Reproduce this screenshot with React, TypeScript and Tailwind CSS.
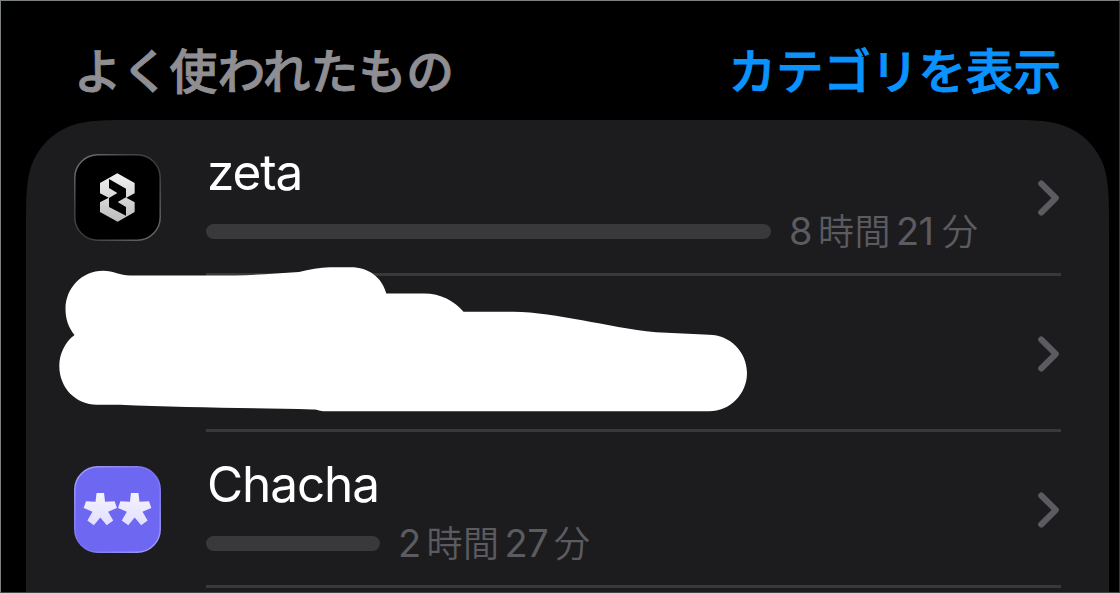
import type { ReactNode } from "react";

const jp = "font-['Inter','Noto_Sans_CJK_JP',sans-serif]";

function Chevron() {
  return (
    <svg className="mt-[3px] h-10 w-6 shrink-0" viewBox="0 0 24 40" fill="none">
      <path d="M4.2 5.5L18.8 20L4.2 34.5" stroke="#5b5b60" strokeWidth="6" strokeLinecap="round" strokeLinejoin="round" />
    </svg>
  );
}

function ZetaIcon() {
  return (
    <svg className="size-[87px]" viewBox="0 0 87 87">
      <defs>
        <linearGradient id="zetaEdge" x1="0" y1="0" x2="1" y2="1">
          <stop offset="0" stopColor="#77777a" />
          <stop offset="0.3" stopColor="#454547" />
          <stop offset="0.55" stopColor="#39393b" />
          <stop offset="1" stopColor="#6e6e70" />
        </linearGradient>
        <linearGradient id="zetaMark" x1="0" y1="0" x2="0" y2="1">
          <stop offset="0" stopColor="#f2f2f2" />
          <stop offset="1" stopColor="#bcbcbc" />
        </linearGradient>
      </defs>
      <rect x="0.8" y="0.8" width="85.4" height="85.4" rx="23" fill="#000" stroke="url(#zetaEdge)" strokeWidth="1.5" />
      <g transform="translate(-14 -14) scale(.33333)">
        <path fill="url(#zetaMark)" d="M172 100L224 129V160L199 173L224 187V216L173 245L120 216V187L146 173L120 160V129Z" />
        <path fill="#000" d="M147 117L198 146V172L173 186L198 201V227L147 201V174L172 159L147 144Z" />
      </g>
    </svg>
  );
}

function ChachaIcon() {
  const star =
    "M-11 -50H11L14 -24L42 -26L49 -6L23 5L38 31L19 45L0 22L-19 45L-38 31L-23 5L-49 -6L-42 -26L-14 -24Z";
  return (
    <svg className="size-[87px]" viewBox="0 0 87 87">
      <defs>
        <linearGradient id="chachaEdge" x1="0" y1="0" x2="1" y2="1">
          <stop offset="0" stopColor="#a6a2f8" />
          <stop offset="0.5" stopColor="#7770ee" />
          <stop offset="1" stopColor="#a29df5" />
        </linearGradient>
        <linearGradient id="chachaStar" x1="0" y1="0" x2="0" y2="1">
          <stop offset="0" stopColor="#f5f3ff" />
          <stop offset="1" stopColor="#e2dffe" />
        </linearGradient>
      </defs>
      <rect x="0.8" y="0.8" width="85.4" height="85.4" rx="23" fill="#6e67f1" stroke="url(#chachaEdge)" strokeWidth="1.5" />
      <g fill="url(#chachaStar)">
        <path transform="translate(26.3 44) scale(.34)" d={star} />
        <path transform="translate(60.7 44) scale(.34)" d={star} />
      </g>
    </svg>
  );
}

function Row({ icon, children }: { icon?: ReactNode; children?: ReactNode }) {
  return (
    <div className="flex h-[156px] shrink-0 pl-12">
      <div className="w-[132px] shrink-0 pt-[34px]">{icon}</div>
      <div className="flex w-[855px] items-center border-b-3 border-[#39393d]">
        <div className="h-full flex-1 pt-[22px]">{children}</div>
        <Chevron />
      </div>
    </div>
  );
}

function Usage({ name, bar, hours, minutes }: { name: string; bar: string; hours: string; minutes: string }) {
  return (
    <>
      <div className="h-[62px] pl-px text-[49.5px] leading-[61px] tracking-[-1.1px] text-white">{name}</div>
      <div className="flex h-[54px] items-center">
        <div className={`h-[15px] shrink-0 rounded-full bg-[#39393b] ${bar}`} />
        <div className="flex items-baseline pt-px pl-[18px] text-[38px] leading-[54px] tracking-[-0.6px] whitespace-nowrap text-[#5b5b60]">
          <span>{hours}</span>
          <span className="pl-[6px] text-[36px] font-[350] tracking-[0.5px]">時間</span>
          <span className="min-w-[45px] pl-[5px]">{minutes}</span>
          <span className="pl-[6px] text-[36px] font-[350]">分</span>
        </div>
      </div>
    </>
  );
}

export default function App() {
  return (
    <main lang="ja" className={`relative flex h-[593px] w-[1120px] flex-col overflow-hidden bg-black ${jp}`}>
      <header className="flex h-[120px] shrink-0 items-center justify-between pt-6 pr-[59px] pl-[74px] font-medium">
        <h2 className="pt-[2px] text-[47.8px] text-[#8e8e93] [-webkit-text-stroke:0.9px_#8e8e93]">よく使われたもの</h2>
        <button className="text-[47.5px] text-[#0a93ff] [-webkit-text-stroke:0.9px_#0a93ff]">カテゴリを表示</button>
      </header>
      <section className="ml-[26px] flex h-[473px] w-[1083px] shrink-0 flex-col overflow-hidden bg-[#1c1c1e] [clip-path:path('M0_473V110C0_78.4_0_62.5_5.4_45.5C12.2_26.8_26.8_12.2_45.5_5.4C62.5_0_78.4_0_110_0H973C1004.6_0_1020.5_0_1037.5_5.4C1056.2_12.2_1070.8_26.8_1077.6_45.5C1083_62.5_1083_78.4_1083_110V473Z')]">
        <Row icon={<ZetaIcon />}>
          <Usage name="zeta" bar="w-[565px]" hours="8" minutes="21" />
        </Row>
        <Row />
        <Row icon={<ChachaIcon />}>
          <Usage name="Chacha" bar="w-[174px]" hours="2" minutes="27" />
        </Row>
      </section>
      <svg className="pointer-events-none absolute inset-0" width="1120" height="593" viewBox="0 0 1120 593">
        <path
          fill="#fff"
          d="M74.5 335C68 327 65.5 318 65.5 309C65.5 288 82 270.8 103 270.8C114 270.8 120 275.6 130 275.6H235C258 274.8 277 273.4 299 272C309 269.5 320 267.3 330 267.3H351C368 267.3 382 277 386.3 293.6H424C441 293.6 454 301 463.5 311.8H513C558 312.5 605 327 656 332.3L709 334.8C730 334.8 747 352 747 373C747 394 730 411.3 709 411.3H325C320 411.3 318 409.5 313 409.5C250 408 180 407.5 120 404.8H97C76 404.8 59.3 388 59.3 366C59.3 354 65 342 74.5 335Z"
        />
      </svg>
      <div className="pointer-events-none absolute inset-0 border border-t-[#7c807e] border-r-[#38383a] border-b-[#454345] border-l-[#7c807e]" />
    </main>
  );
}
